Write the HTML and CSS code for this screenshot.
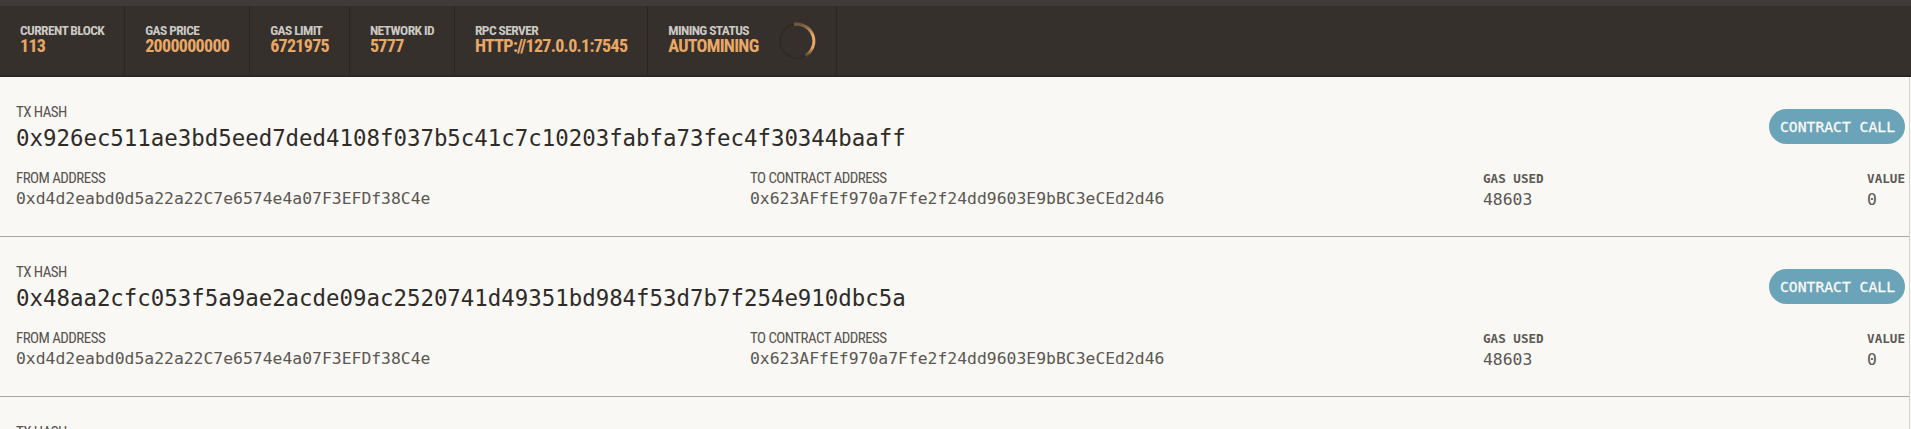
FILE: index.html
```html
<!DOCTYPE html>
<html>
<head>
<meta charset="utf-8">
<link rel="stylesheet" href="styles.css">
</head>
<body>
<header class="topbar">
  <div class="stat">
    <div class="stat-label">CURRENT BLOCK</div>
    <div class="stat-value">113</div>
  </div>
  <div class="stat">
    <div class="stat-label">GAS PRICE</div>
    <div class="stat-value">2000000000</div>
  </div>
  <div class="stat">
    <div class="stat-label">GAS LIMIT</div>
    <div class="stat-value">6721975</div>
  </div>
  <div class="stat">
    <div class="stat-label">NETWORK ID</div>
    <div class="stat-value">5777</div>
  </div>
  <div class="stat">
    <div class="stat-label">RPC SERVER</div>
    <div class="stat-value">HTTP://127.0.0.1:7545</div>
  </div>
  <div class="stat stat-mining">
    <div class="stat-text">
      <div class="stat-label">MINING STATUS</div>
      <div class="stat-value">AUTOMINING</div>
    </div>
    <svg class="spinner" width="38" height="38" viewBox="0 0 38 38">
      <defs>
        <linearGradient id="arcfade" x1="0" y1="0" x2="0" y2="1">
          <stop offset="0" stop-color="#e9a866" stop-opacity="0.35"/>
          <stop offset="0.35" stop-color="#e9a866" stop-opacity="1"/>
          <stop offset="0.75" stop-color="#e9a866" stop-opacity="1"/>
          <stop offset="1" stop-color="#e9a866" stop-opacity="0.2"/>
        </linearGradient>
      </defs>
      <circle cx="19" cy="19" r="17" fill="none" stroke="#2f2a26" stroke-width="2"/>
      <path d="M16 2.3 A17 17 0 0 1 27.5 33.7" fill="none" stroke="url(#arcfade)" stroke-width="3"/>
    </svg>
  </div>
  <div class="stat-fill"></div>
</header>

<main class="txlist">
  <section class="tx">
    <div class="tx-top">
      <div class="tx-hash-block">
        <div class="field-label">TX HASH</div>
        <div class="tx-hash">0x926ec511ae3bd5eed7ded4108f037b5c41c7c10203fabfa73fec4f30344baaff</div>
      </div>
      <div class="badge">CONTRACT CALL</div>
    </div>
    <div class="tx-details">
      <div class="detail">
        <div class="field-label">FROM ADDRESS</div>
        <div class="detail-value">0xd4d2eabd0d5a22a22C7e6574e4a07F3EFDf38C4e</div>
      </div>
      <div class="detail">
        <div class="field-label">TO CONTRACT ADDRESS</div>
        <div class="detail-value">0x623AFfEf970a7Ffe2f24dd9603E9bBC3eCEd2d46</div>
      </div>
      <div class="detail">
        <div class="mono-label">GAS USED</div>
        <div class="detail-value">48603</div>
      </div>
      <div class="detail">
        <div class="mono-label">VALUE</div>
        <div class="detail-value">0</div>
      </div>
    </div>
  </section>

  <section class="tx">
    <div class="tx-top">
      <div class="tx-hash-block">
        <div class="field-label">TX HASH</div>
        <div class="tx-hash">0x48aa2cfc053f5a9ae2acde09ac2520741d49351bd984f53d7b7f254e910dbc5a</div>
      </div>
      <div class="badge">CONTRACT CALL</div>
    </div>
    <div class="tx-details">
      <div class="detail">
        <div class="field-label">FROM ADDRESS</div>
        <div class="detail-value">0xd4d2eabd0d5a22a22C7e6574e4a07F3EFDf38C4e</div>
      </div>
      <div class="detail">
        <div class="field-label">TO CONTRACT ADDRESS</div>
        <div class="detail-value">0x623AFfEf970a7Ffe2f24dd9603E9bBC3eCEd2d46</div>
      </div>
      <div class="detail">
        <div class="mono-label">GAS USED</div>
        <div class="detail-value">48603</div>
      </div>
      <div class="detail">
        <div class="mono-label">VALUE</div>
        <div class="detail-value">0</div>
      </div>
    </div>
  </section>

  <section class="tx">
    <div class="tx-top">
      <div class="tx-hash-block">
        <div class="field-label">TX HASH</div>
      </div>
    </div>
  </section>
</main>
</body>
</html>
```

FILE: styles.css
```css
html, body {
  margin: 0;
  padding: 0;
}

body {
  background: #f9f8f4;
  font-family: "Roboto Condensed", "Roboto", "Liberation Sans", sans-serif;
  overflow: hidden;
  height: 429px;
}

.topbar {
  display: flex;
  height: 69px;
  background: #35302c;
  border-top: 6px solid #403b38;
  border-bottom: 2px solid #2b2724;
}

.stat {
  padding: 18px 20px 0 20px;
  border-right: 1px solid #2a2622;
  box-sizing: border-box;
}

.stat-fill {
  flex: 1;
}

.stat-label {
  font-size: 13.5px;
  line-height: 13px;
  font-weight: 700;
  color: #cbc8c3;
  font-stretch: condensed;
  letter-spacing: -0.6px;
}

.stat-value {
  font-size: 18px;
  line-height: 18px;
  font-weight: 700;
  color: #e9a866;
  font-stretch: condensed;
  letter-spacing: -0.7px;
}

.stat-mining {
  display: flex;
  gap: 19px;
  align-items: flex-start;
}

.spinner {
  margin-top: -2px;
  display: block;
}

.txlist {
  margin-right: 1px;
  border-right: 1px solid #d3d1cd;
  height: 360px;
}

.tx {
  padding: 26px 4px 0 16px;
  box-sizing: border-box;
  height: 160px;
  border-bottom: 1px solid #a9a7a3;
}

.tx-top {
  display: flex;
  justify-content: space-between;
  align-items: flex-start;
}

.field-label {
  font-size: 15px;
  line-height: 18px;
  color: #57534e;
  font-stretch: condensed;
  letter-spacing: -0.55px;
}

.tx-hash {
  margin-top: 4px;
  font-family: "DejaVu Sans Mono", "Liberation Mono", monospace;
  font-size: 22.4px;
  line-height: 26px;
  color: #2f2b28;
}

.badge {
  margin-top: 6px;
  height: 35px;
  box-sizing: border-box;
  padding: 0 10px 0 11px;
  border-radius: 18px;
  background: #6ba3b8;
  color: #fbfaf6;
  font-family: "DejaVu Sans Mono", "Liberation Mono", monospace;
  font-size: 14.7px;
  line-height: 35px;
  white-space: nowrap;
  -webkit-text-stroke: 0.3px #fbfaf6;
}

.tx-details {
  display: grid;
  grid-template-columns: 734px 733px 1fr auto;
  margin-top: 18px;
}

.mono-label {
  font-family: "DejaVu Sans Mono", "Liberation Mono", monospace;
  font-weight: 700;
  font-size: 12.6px;
  line-height: 18px;
  color: #5d5955;
  padding-top: 1px;
}

.detail-value {
  margin-top: 2px;
  font-family: "DejaVu Sans Mono", "Liberation Mono", monospace;
  font-size: 16.4px;
  line-height: 20px;
  color: #5b5753;
}
```
